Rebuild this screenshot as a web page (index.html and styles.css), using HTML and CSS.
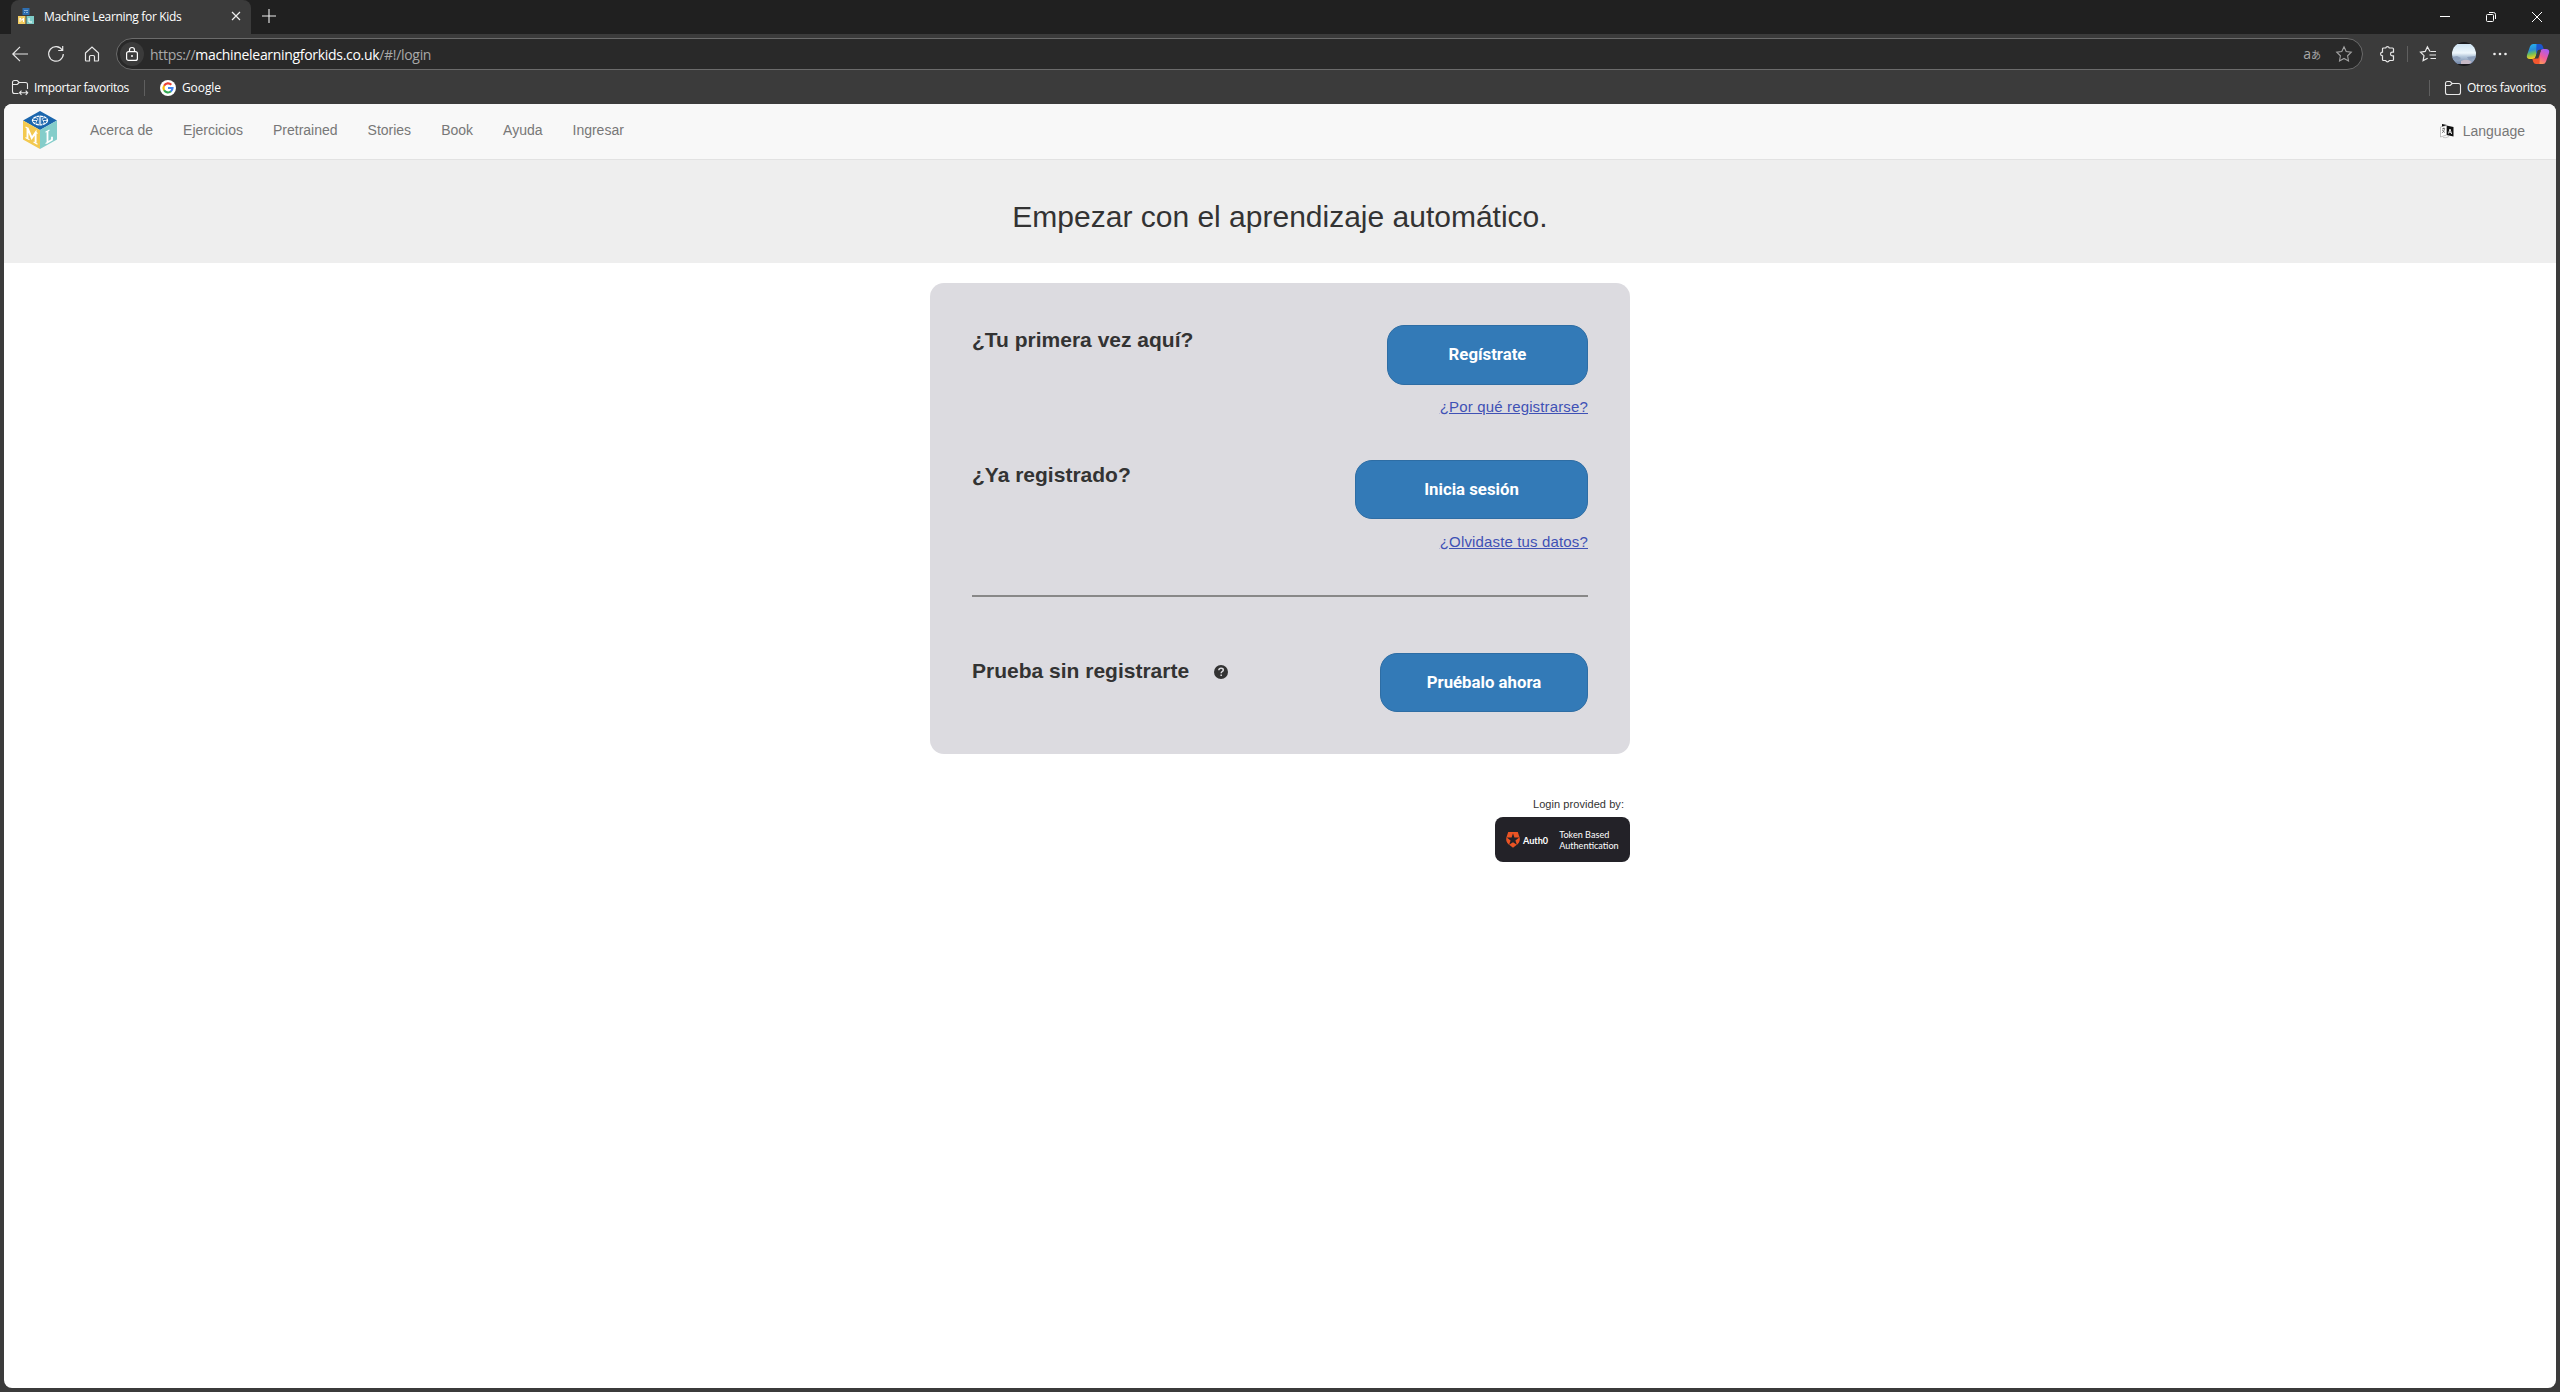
FILE: index.html
```html
<!DOCTYPE html>
<html lang="es">
<head>
<meta charset="utf-8">
<title>Machine Learning for Kids</title>
<link rel="stylesheet" href="styles.css">
</head>
<body>
<div class="browser">
  <div class="tabstrip">
    <div class="tab">
      <svg class="favicon" viewBox="0 0 16 16" width="16" height="16"><path fill="#2e6eb0" d="M4.500 0h7v7h-7z"/><path fill="#8fb4d8" d="M6 2h4v1H6zM6 4h1v1H6zM8 4h2v1H8z"/><path fill="#f3cd62" d="M0 8h7.500v8H0z"/><path fill="#7fcdc9" d="M8.500 8H16v8H8.500z"/><path d="M2 14v-4l1.800 2.500L5.500 10v4M11 10v4h3" fill="none" stroke="#fff"/></svg>
      <span class="tab-title">Machine Learning for Kids</span>
      <svg class="tab-close" viewBox="0 0 8 8" width="8" height="8"><path d="M0 0l8 8M8 0L0 8" stroke="#eee" stroke-width="1.200"/></svg>
    </div>
    <svg class="new-tab" viewBox="0 0 14 14" width="14" height="14"><path d="M7 0v14M0 7h14" stroke="#eee" stroke-width="1.100"/></svg>
    <div class="window-controls">
      <svg viewBox="0 0 10 10" width="10" height="10"><path d="M0 4.500h10" stroke="#fff"/></svg>
      <svg viewBox="0 0 10 10" width="10" height="10"><rect x=".5" y="2.500" width="7" height="7" rx="1" fill="none" stroke="#fff"/><path d="M3 .5h4.500q2 0 2 2V7" fill="none" stroke="#fff"/></svg>
      <svg viewBox="0 0 10 10" width="10" height="10"><path d="M0 0l10 10M10 0L0 10" stroke="#fff"/></svg>
    </div>
  </div>

  <div class="toolbar">
    <svg class="back" viewBox="0 0 16 16" width="16" height="16"><path d="M8 .8L.8 8 8 15.200M1 8h15" fill="none" stroke="#e8e8e8" stroke-width="1.200"/></svg>
    <svg class="reload" viewBox="0 0 16 16" width="16" height="16"><path d="M14.200 4A7.300 7.300 0 1 0 15.300 8M14.700 0v4.500h-4.500" fill="none" stroke="#e8e8e8" stroke-width="1.200"/></svg>
    <svg class="home" viewBox="0 0 16 16" width="16" height="16"><path d="M1.500 7L8 1l6.500 6v7.300q0 .7-.7.7H10.500v-4.300q0-1.200-1.200-1.200H6.700q-1.200 0-1.200 1.200V15H2.200q-.7 0-.7-.7z" fill="none" stroke="#e8e8e8" stroke-width="1.200"/></svg>
    <div class="address">
      <span class="lock"><svg viewBox="0 0 14 14" width="14" height="14"><rect x="1.600" y="4.600" width="10.800" height="8.800" rx="2" fill="none" stroke="#fff" stroke-width="1.200"/><path d="M4.500 4.500V3a2.500 2.500 0 0 1 5 0v1.500" fill="none" stroke="#fff" stroke-width="1.200"/><circle cx="7" cy="9" r="1" fill="#fff"/></svg></span>
      <span class="url">https://<b>machinelearningforkids.co.uk</b>/#!/login</span>
      <span class="translate">a<small>あ</small></span>
      <svg class="star" viewBox="0 0 16 16" width="16" height="16"><path d="M8 .8l2.200 4.700 5.100.7-3.700 3.600.9 5.200L8 12.500 3.500 15l.9-5.200L.7 6.200l5.100-.7z" fill="none" stroke="#a3a3a3" stroke-width="1.100"/></svg>
    </div>
    <svg class="puzzle" viewBox="0 0 16 16" width="16" height="16"><path d="M4.500 2h2.200a1.900 1.900 0 0 1 3.600 0h3.200q1 0 1 1v3.200h-1.200a1.800 1.800 0 0 0 0 3.600h1.200V13.500q0 1-1 1h-3.200a1.900 1.900 0 0 1-3.600 0H4.500q-1 0-1-1V9.900a1.900 1.900 0 0 1 0-3.800V3q0-1 1-1z" fill="none" stroke="#e8e8e8" stroke-width="1.200"/></svg>
    <i class="divider"></i>
    <svg class="favorites" viewBox="0 0 16 16" width="16" height="16"><path d="M10 5.500L7.400.8 5.200 5.400l-4.700.7 3.500 3.500-.9 5 4.600-2.400M10.500 5.500h5.500M9.500 9h6.500M10.500 12.500h5.500" fill="none" stroke="#e8e8e8" stroke-width="1.200"/></svg>
    <svg class="avatar" viewBox="0 0 24 24" width="24" height="24"><defs><linearGradient id="sky" x2="0" y2="1"><stop offset="0" stop-color="#cfe3f2"/><stop offset=".45" stop-color="#eef7fc"/><stop offset=".62" stop-color="#b6c9dc"/><stop offset="1" stop-color="#6f83a5"/></linearGradient><clipPath id="round"><circle cx="12" cy="12" r="12"/></clipPath></defs><g clip-path="url(#round)"><path fill="#1a1a1e" d="M0 0h24v24H0z"/><path fill="url(#sky)" d="M0 2h24v20H0z"/><path fill="#8d9fba" d="M0 15l5-1 4 2-2 2H0zM15 15l9-1v3l-7 1z"/><path fill="#c6b9c6" d="M9 19q6-3 11 1l-3 2H9z"/></g></svg>
    <svg class="more" viewBox="0 0 14 4" width="14" height="4"><g fill="#eee"><circle cx="1.500" cy="2" r="1.300"/><circle cx="7" cy="2" r="1.300"/><circle cx="12.500" cy="2" r="1.300"/></g></svg>
    <svg class="copilot" viewBox="0 0 22 20" width="22" height="20"><defs><linearGradient id="cool" x2=".2" y2="1"><stop offset="0" stop-color="#25b5f3"/><stop offset=".45" stop-color="#2a8fd8"/><stop offset=".7" stop-color="#6fbf5a"/><stop offset="1" stop-color="#f5cd1d"/></linearGradient><linearGradient id="warm" x1=".7" x2=".2" y2="1"><stop offset="0" stop-color="#a65cf5"/><stop offset=".5" stop-color="#f05b9b"/><stop offset="1" stop-color="#ffa04e"/></linearGradient></defs><path fill="url(#cool)" d="M6 0h7L9 12q-.8 3-3 3H3q-4 0-3-4L3 2.500Q3.800 0 6 0z"/><path fill="#1c55cf" d="M9.500 0H13q2 0 2.700 2l1.200 3.500H13q-2 0-2.800 2L9 11z"/><path fill="url(#warm)" d="M16 20H9l4-12q.8-3 3-3h3q4 0 3 4l-3 8.500q-.8 2.500-3 2.500z"/><path fill="#f2572f" d="M12.500 20H9q-2 0-2.700-2l-1-3.200H7q2 0 2.800-2L13 9z"/><path fill="#3b3b3b" d="M10.700 6.500h3.300l-2.700 8H8z"/></svg>
  </div>

  <div class="bookmarks">
    <svg class="import" viewBox="0 0 16 16" width="16" height="16"><path d="M6.500 13.500H2.500q-2 0-2-2v-9q0-2 2-2h2.700l2 2H13.500q2 0 2 2V9M.5 4.500h4.700l2-2M7.800 12.800h7.700M9.500 10.700l-2 2.100 2 2.100M13.700 10.700l2 2.100-2 2.100" fill="none" stroke="#e8e8e8" stroke-width="1.100"/></svg>
    <span class="import-label">Importar favoritos</span>
    <i class="divider"></i>
    <svg class="google" viewBox="0 0 16 16" width="16" height="16"><circle cx="8" cy="8" r="8" fill="#fff"/><g fill="none" stroke-width="2.200"><path stroke="#ea4335" d="M4.100 5.700A4.500 4.500 0 0 1 11.300 4.800"/><path stroke="#fbbc05" d="M4.100 10.300a4.600 4.600 0 0 1 0-4.600"/><path stroke="#34a853" d="M4.100 10.300A4.500 4.500 0 0 0 11 11.300"/><path stroke="#4285f4" d="M8 8h4.500A4.400 4.400 0 0 1 10.800 11.400"/></g></svg>
    <span class="google-label">Google</span>
    <i class="divider others-divider"></i>
    <svg class="folder" viewBox="0 0 16 14" width="16" height="14"><path d="M2.500.5h2.700l2 2H13.500q2 0 2 2v7q0 2-2 2h-11q-2 0-2-2v-9q0-2 2-2zM.5 4.500h4.700l2-2" fill="none" stroke="#e8e8e8" stroke-width="1.100"/></svg>
    <span class="others-label">Otros favoritos</span>
  </div>

  <div class="page">
    <nav class="navbar">
      <svg class="logo" viewBox="0 0 34 38" width="34" height="38"><path fill="#1b66ad" d="M17 0l17 9.500L17 19 0 9.500z"/><path fill="#f3c94f" d="M0 9.500L17 19v19L0 28.500z"/><path fill="#84cdca" d="M34 9.500L17 19v19l17-9.500z"/><g fill="none" stroke="#fff"><ellipse cx="17" cy="9.500" rx="7.500" ry="4.300" stroke-width="1.300" stroke-dasharray="3 .5"/><path stroke-width=".8" d="M16.300 5.500v8M17.700 5.500v8M12.500 7q3.500 0 1.500 2.500t0 3M21.500 7q-3.500 0-1.500 2.500t0 3M10 9.500h4M20 9.500h4"/><path stroke-width="1.900" d="M4.500 17v10.500M4.500 17l4.300 10 3.800-5.500v10.300"/><path stroke-width="1.200" d="M2.500 16l2.500 1.200M2.500 26.500l4 2.200M12 21l2.500 1.500M10.500 31l4 2.200"/><path stroke-width="1.800" d="M24.500 20v11.500l4.500-2.800v-3"/><path stroke-width="1.100" d="M22.500 21.200l4-2.300M22.500 32.500l2-1"/></g></svg>
      <a>Acerca de</a><a>Ejercicios</a><a>Pretrained</a><a>Stories</a><a>Book</a><a>Ayuda</a><a>Ingresar</a>
      <div class="language">
        <svg viewBox="0 0 14 14" width="14" height="14"><path fill="#111" d="M6.500 1.500L13.500 3v9.500l-7-1.500z"/><path fill="#fff" stroke="#999" stroke-width=".6" d="M.5 3l6-1.500V11l-6 2z"/><path fill="#111" d="M2 0l5 1-5 1.500z"/><path d="M2 5l3-.8M3.500 3.800v1M4.700 4.600q-.7 3-2.700 4.500M2.300 6q1 2 2.700 2.500" fill="none" stroke="#555" stroke-width=".7"/><path d="M8.500 9.500L10 5l1.600 5M9 8l2 .4" fill="none" stroke="#fff" stroke-width=".9"/><path d="M3 13.500q3 1 6-1" fill="none" stroke="#aaa" stroke-width=".6"/></svg>
        <span>Language</span>
      </div>
    </nav>
    <header class="banner"><h1>Empezar con el aprendizaje automático.</h1></header>
    <main class="content">
      <section class="card">
        <div class="row first">
          <h2>¿Tu primera vez aquí?</h2>
          <div class="action"><button class="btn register">Regístrate</button><a class="link">¿Por qué registrarse?</a></div>
        </div>
        <div class="row second">
          <h2>¿Ya registrado?</h2>
          <div class="action"><button class="btn login">Inicia sesión</button><a class="link">¿Olvidaste tus datos?</a></div>
        </div>
        <hr>
        <div class="row third">
          <h2><span>Prueba sin registrarte</span><svg class="help" viewBox="0 0 14 14" width="14" height="14"><circle cx="7" cy="7" r="7" fill="#333"/><path d="M4.800 5.300q.2-2 2.300-2t2.200 1.700q0 1-1.200 1.700-.9.500-.9 1.500M7.200 9.500v1.600" fill="none" stroke="#dcdbe0" stroke-width="1.500"/></svg></h2>
          <div class="action"><button class="btn try">Pruébalo ahora</button></div>
        </div>
      </section>
      <aside class="provider">
        <span class="provider-label">Login provided by:</span>
        <div class="badge">
          <svg viewBox="0 0 14 16" width="14" height="16"><path fill="#eb5424" d="M2.200 0h9.600L13.600 5.500Q14.500 9 11.800 12L7 15.800 2.200 12Q-.5 9 .4 5.500z"/><path fill="#232228" d="M7 1.200l1.400 4.200h4.800L9.400 8.400l1.500 4.300L7 10.200l-3.900 2.500 1.500-4.300L.8 5.400h4.800z"/></svg>
          <b>Auth0</b>
          <span class="badge-text">Token Based<br>Authentication</span>
        </div>
      </aside>
    </main>
  </div>
</div>
</body>
</html>
```
FILE: styles.css
```css
* { box-sizing: border-box; }
body { margin: 0; font-family: "Liberation Sans", Arial, sans-serif; color: #333; background: #3b3b3b; }
svg { display: block; flex: none; overflow: visible; }
.browser { display: flex; flex-direction: column; width: 2560px; height: 1392px; padding-bottom: 4px; background: #3b3b3b; overflow: hidden; font-family: "Open Sans", "Noto Sans", sans-serif; font-size: 12px; color: #fff; white-space: nowrap; }

.tabstrip { display: flex; height: 34px; flex: none; padding-left: 11px; background: #202020; }
.tab { display: flex; align-items: center; width: 240px; height: 34px; padding: 0 11px 2px 7px; background: #3b3b3b; border-radius: 8px 8px 0 0; }
.tab-title { margin-left: 10px; letter-spacing: -.32px; }
.tab-close { margin-left: auto; }
.new-tab { margin: 9px 0 0 11px; }
.window-controls { display: flex; gap: 36px; margin: 12px 18px 0 auto; }

.toolbar { display: flex; align-items: center; height: 40px; flex: none; padding-left: 12px; }
.reload { margin-left: 20px; }
.home { margin-left: 20px; }
.address { display: flex; align-items: center; width: 2247px; height: 32px; margin-left: 16px; padding: 0 10px 0 3px; border: 1px solid #6b6b6b; border-radius: 16px; background: #292929; color: #a8a8a8; font-size: 14px; }
.lock { display: grid; place-items: center; width: 24px; height: 24px; border-radius: 50%; background: #3b3b3b; }
.url { margin-left: 6px; letter-spacing: -.31px; }
.url b { font-weight: 400; color: #fff; }
.translate { margin-left: auto; margin-right: 15px; font-size: 14px; line-height: 20px; }
.translate small { font: 10px "Noto Sans CJK JP", sans-serif; }
.puzzle { margin-left: 16px; }
.divider { width: 1px; height: 16px; background: #5f5f5f; }
.toolbar .divider { margin-left: 12px; }
.favorites { margin-left: 12px; }
.avatar { margin-left: 16px; }
.more { margin-left: 17px; }
.copilot { margin-left: 20px; }

.bookmarks { display: flex; align-items: center; height: 30px; flex: none; padding: 0 14px 3px 12px; }
.import-label { margin-left: 6px; letter-spacing: -.39px; }
.bookmarks .divider { margin-left: 15px; }
.google { margin-left: 15px; }
.google-label { margin-left: 6px; letter-spacing: -.08px; }
.bookmarks .others-divider { margin-left: auto; }
.folder { margin-left: 15px; }
.others-label { margin-left: 6px; letter-spacing: -.31px; }

.page { flex: 1; margin: 0 4px; border-radius: 8px; background: #fff; overflow: hidden; font-family: "Liberation Sans", Arial, sans-serif; color: #333; }
.navbar { display: flex; align-items: center; height: 56px; padding: 0 31px 3px 19px; border-bottom: 1px solid #e2e2e2; background: #f8f8f8; font-size: 14px; color: #777; }
.logo { margin-right: 18px; }
.navbar a { padding: 0 15px; }
.language { display: flex; align-items: center; gap: 9px; margin-left: auto; padding-top: 2px; }
.banner { display: flex; justify-content: center; height: 103px; padding-top: 40px; background: #eee; }
.banner h1 { margin: 0; font-size: 30px; font-weight: 400; line-height: 33px; }
.content { width: 700px; margin: 20px auto 0; }
.card { height: 471px; padding: 42px; border-radius: 14px; background: #dcdbe0; }
.row { display: flex; justify-content: space-between; }
.first, .second { height: 135px; }
.row h2 { display: flex; align-items: center; margin: 3px 0 0; height: 24px; font-size: 21px; font-weight: 700; }
.help { margin: 1px 0 0 25px; }
.action { display: flex; flex-direction: column; align-items: flex-end; }
.btn { height: 59px; padding: 0 0 1px; border: 1px solid #2e6da4; border-radius: 17px; background: #337ab7; color: #fff; font: 700 16.800px Roboto, sans-serif; }
.register { width: 201px; height: 60px; padding-bottom: 2px; }
.login { width: 233px; }
.try { width: 208px; padding-bottom: 2px; }
.link { margin-top: 13px; font-size: 15px; line-height: 18px; letter-spacing: .15px; color: #3f51b5; text-decoration: underline; }
.second .link { margin-top: 14px; }
hr { height: 2px; margin: 0 0 56px; border: 0; background: #888; }
.third h2 { margin-top: 6px; }
.provider { display: flex; flex-direction: column; align-items: flex-end; padding-top: 44px; }
.provider-label { margin-right: 6px; font-size: 11px; line-height: 13px; letter-spacing: .06px; }
.badge { display: flex; align-items: center; width: 135px; height: 45px; margin-top: 6px; padding-left: 11px; border-radius: 8px; background: #232228; color: #fff; font: 9.100px/11px Lato, sans-serif; }
.badge b { margin: 1px 0 0 3px; }
.badge-text { margin-left: 11px; }
```
